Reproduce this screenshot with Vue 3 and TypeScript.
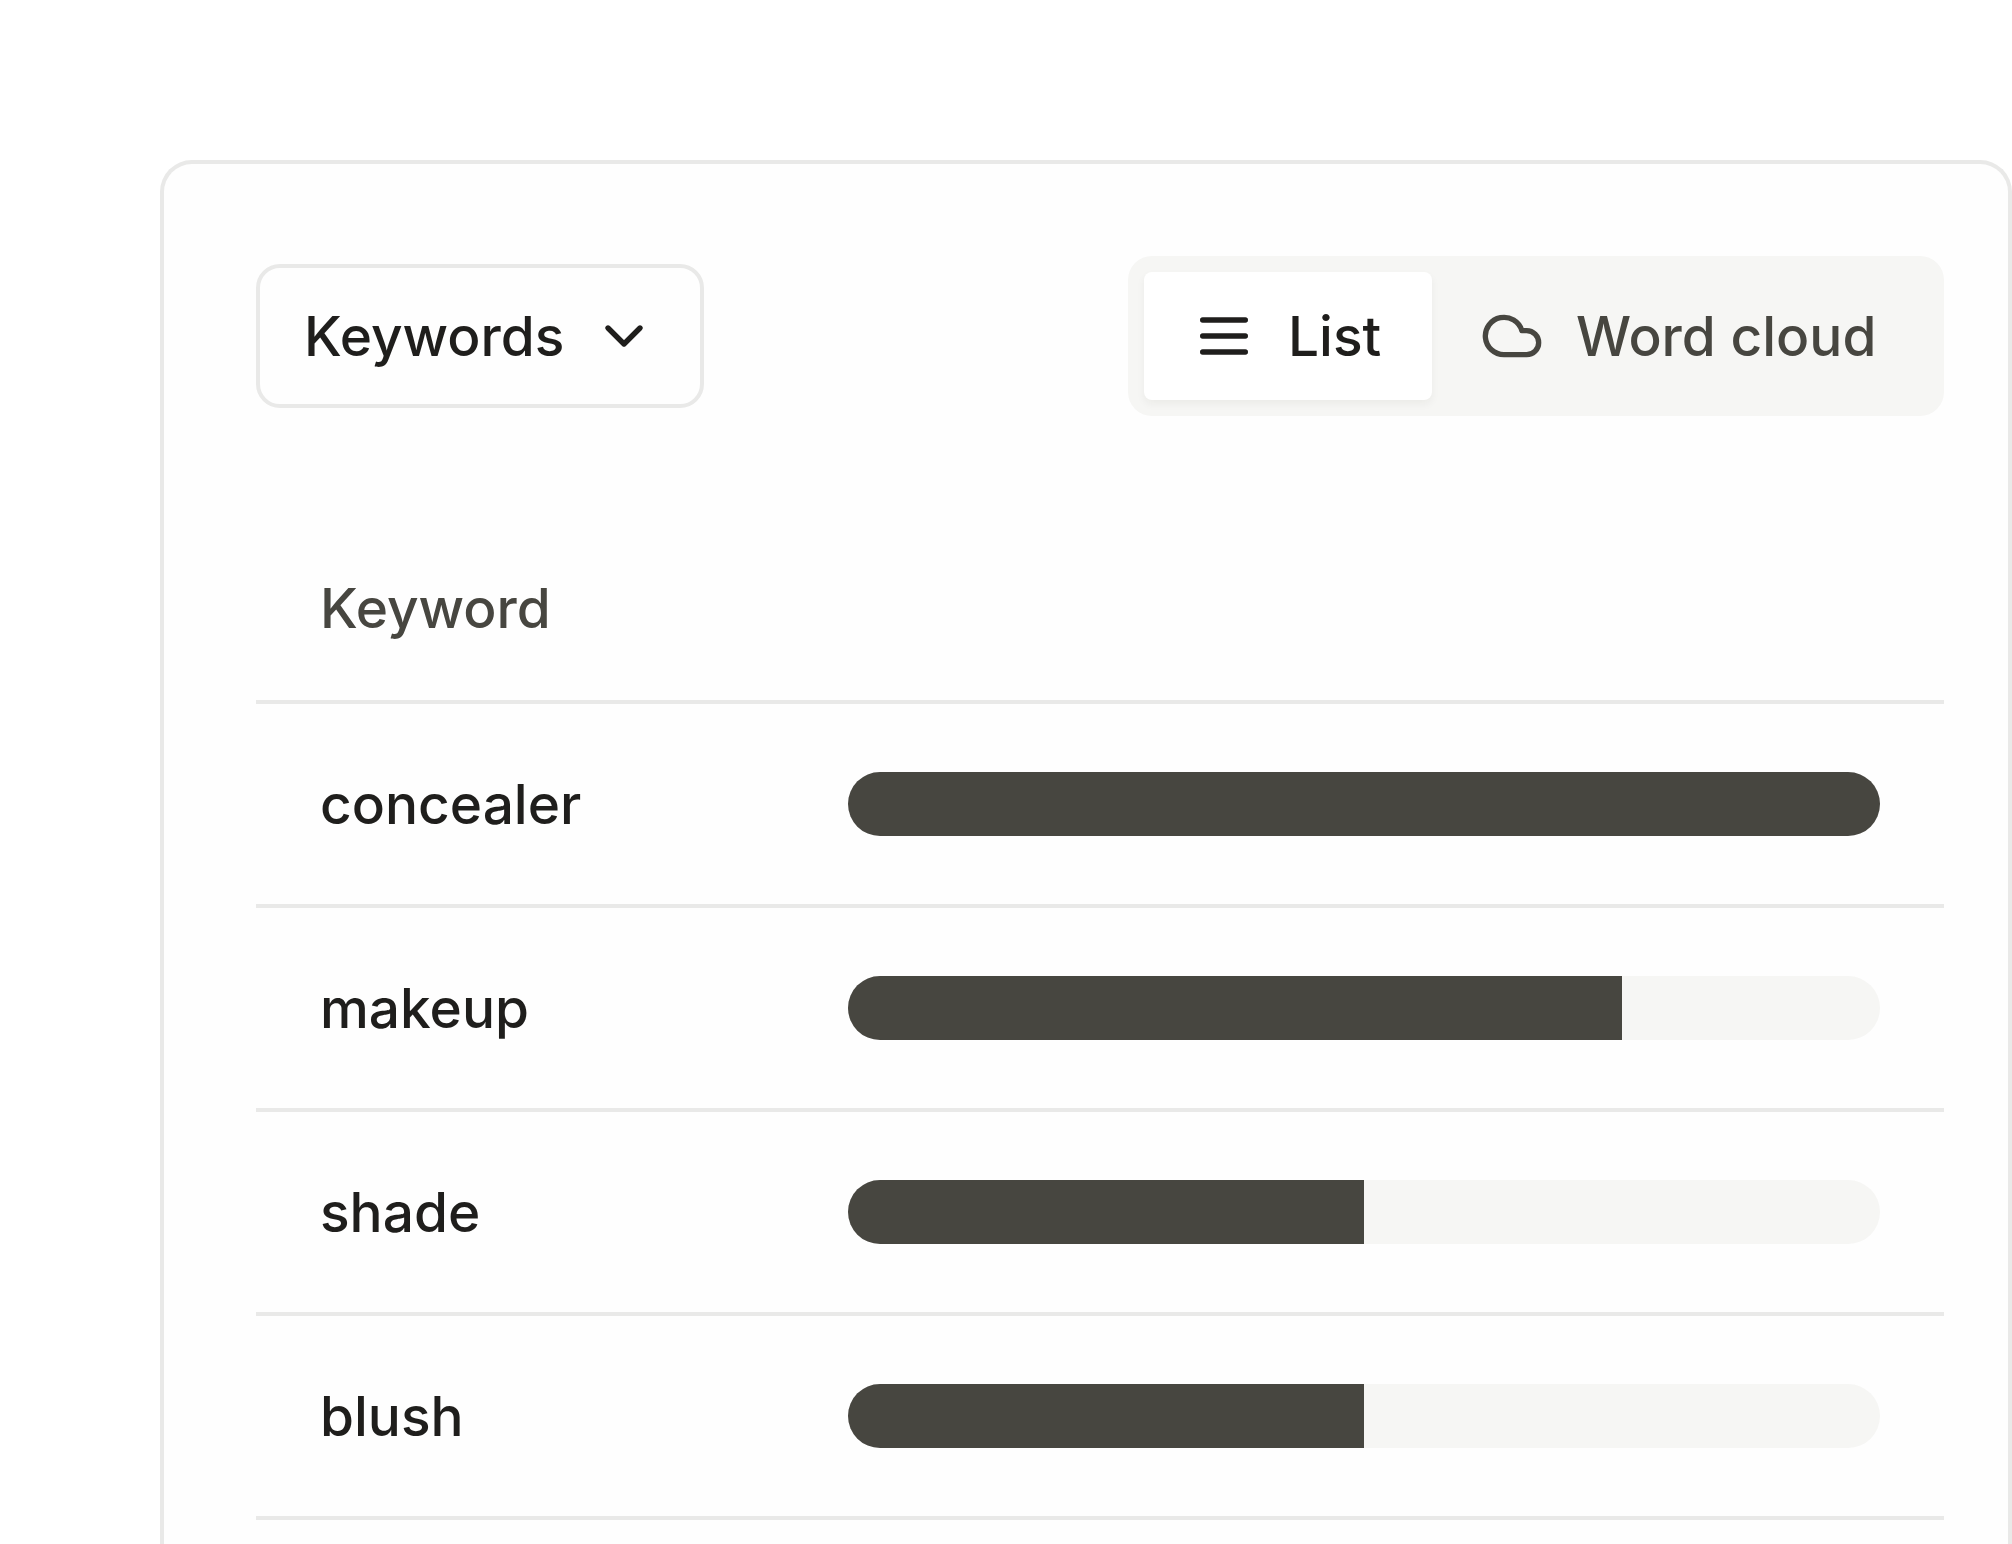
<script setup lang="ts">
import { ref } from 'vue'

interface KeywordRow {
  keyword: string
  share: number
}

type View = 'list' | 'cloud'

const source = ref('keywords')
const view = ref<View>('list')

const rows: KeywordRow[] = [
  { keyword: 'concealer', share: 100 },
  { keyword: 'makeup', share: 75 },
  { keyword: 'shade', share: 50 },
  { keyword: 'blush', share: 50 },
]
</script>

<template>
  <main class="page">
    <section class="card">
      <header class="toolbar">
        <div class="picker">
          <select v-model="source" class="picker-select" aria-label="Data shown">
            <option value="keywords">Keywords</option>
          </select>
          <svg class="icon picker-icon" viewBox="0 0 24 24" aria-hidden="true">
            <path d="m6 9 6 6 6-6" />
          </svg>
        </div>

        <div class="switch" role="group" aria-label="View">
          <button
            type="button"
            class="switch-item"
            :class="{ active: view === 'list' }"
            :aria-pressed="view === 'list'"
            @click="view = 'list'"
          >
            <svg class="icon" viewBox="0 0 24 24" aria-hidden="true">
              <path d="M4 6h16M4 12h16M4 18h16" />
            </svg>
            <span>List</span>
          </button>
          <button
            type="button"
            class="switch-item wide"
            :class="{ active: view === 'cloud' }"
            :aria-pressed="view === 'cloud'"
            @click="view = 'cloud'"
          >
            <svg class="icon" viewBox="0 0 24 24" aria-hidden="true">
              <path d="M17.5 19H9a7 7 0 1 1 6.71-9h1.79a4.5 4.5 0 1 1 0 9Z" />
            </svg>
            <span>Word cloud</span>
          </button>
        </div>
      </header>

      <table class="keywords">
        <thead>
          <tr>
            <th scope="col" class="name">Keyword</th>
            <td></td>
          </tr>
        </thead>
        <tbody>
          <tr v-for="row in rows" :key="row.keyword">
            <th scope="row" class="name">{{ row.keyword }}</th>
            <td class="share">
              <div class="track">
                <div class="fill" :style="{ width: row.share + '%' }"></div>
              </div>
            </td>
          </tr>
        </tbody>
      </table>
    </section>
  </main>
</template>

<style>
body {
  background: #ffffff;
}
</style>

<style scoped>
.page {
  --ink: #1f1e1c;
  --muted: #474640;
  --line: #e9e9e8;
  --soft: #f6f6f4;

  box-sizing: border-box;
  display: flex;
  min-height: 100vh;
  padding: 160px 0 0 160px;
  color: var(--ink);
  font-family: Inter, "Liberation Sans", sans-serif;
  font-size: 55px;
  font-weight: 500;
  line-height: 80px;
}

.card {
  box-sizing: border-box;
  flex: 1;
  min-width: 0;
  padding: 92px 64px 24px 92px;
  border: 4px solid var(--line);
  border-bottom: 0;
  border-radius: 32px 32px 0 0;
  background: #fefefe;
}

.toolbar {
  display: flex;
  align-items: center;
  justify-content: space-between;
}

.icon {
  flex: none;
  width: 64px;
  height: 64px;
  fill: none;
  stroke: currentColor;
  stroke-width: 2;
  stroke-linecap: round;
  stroke-linejoin: round;
}

.picker {
  display: grid;
  align-items: center;
  width: 448px;
}

.picker-select,
.picker-icon {
  grid-area: 1 / 1;
}

.picker-select {
  box-sizing: border-box;
  width: 100%;
  height: 144px;
  margin: 0;
  padding: 0 0 0 44px;
  border: 4px solid var(--line);
  border-radius: 24px;
  background: transparent;
  color: inherit;
  font: inherit;
  appearance: none;
}

.picker-icon {
  justify-self: end;
  margin-right: 48px;
  pointer-events: none;
}

.switch {
  display: flex;
  padding: 16px;
  border-radius: 24px;
  background: var(--soft);
}

.switch-item {
  box-sizing: border-box;
  display: flex;
  align-items: center;
  gap: 32px;
  min-width: 288px;
  height: 128px;
  padding: 0 0 0 48px;
  border: 0;
  border-radius: 8px;
  background: transparent;
  color: var(--muted);
  font: inherit;
  white-space: nowrap;
}

.switch-item.wide {
  min-width: 496px;
}

.switch-item.active {
  background: #ffffff;
  box-shadow: 0 4px 8px rgba(31, 30, 28, 0.05);
  color: var(--ink);
}

.keywords {
  width: 100%;
  margin-top: 100px;
  border-spacing: 0;
  table-layout: fixed;
}

.keywords th,
.keywords td {
  padding: 0 64px;
  border-bottom: 4px solid var(--line);
  font-weight: inherit;
  text-align: left;
}

.keywords .name {
  box-sizing: border-box;
  width: 528px;
  padding-right: 0;
}

.keywords thead th {
  height: 188px;
  color: var(--muted);
}

.keywords tbody th {
  height: 204px;
}

.track {
  height: 64px;
  overflow: hidden;
  border-radius: 32px;
  background: var(--soft);
}

.fill {
  height: 100%;
  background: var(--muted);
}
</style>
